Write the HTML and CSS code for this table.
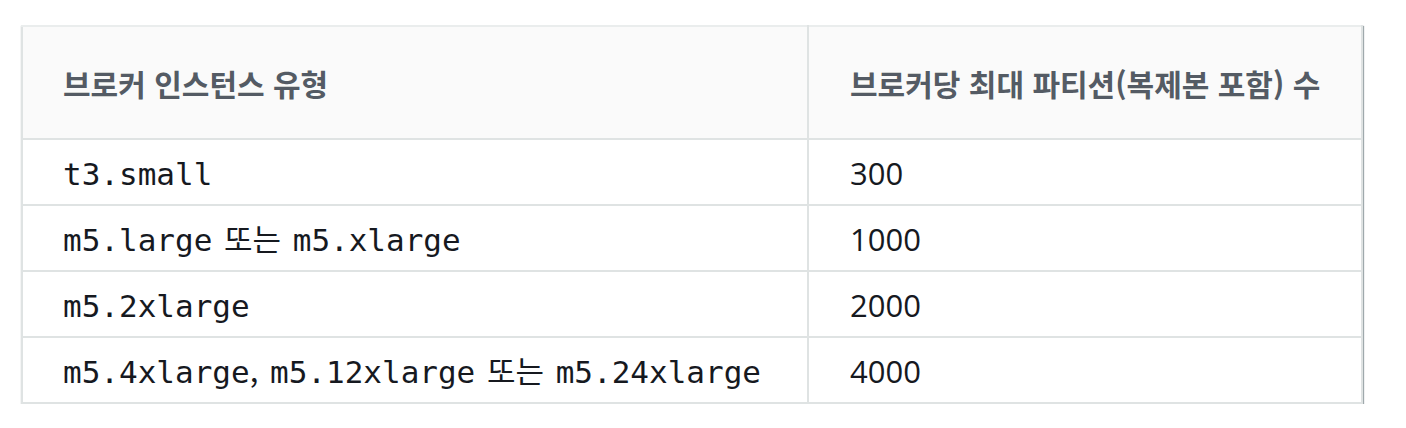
FILE: index.html
```html
<!DOCTYPE html>
<html lang="ko">
<head>
<meta charset="utf-8">
<link rel="stylesheet" href="styles.css">
</head>
<body>
<div class="wrap">
  <table class="tbl">
    <thead>
      <tr>
        <th class="c1">브로커 인스턴스 유형</th>
        <th class="c2">브로커당 최대 파티션(복제본 포함) 수</th>
      </tr>
    </thead>
    <tbody>
      <tr><td><code>t3.small</code></td><td class="num">300</td></tr>
      <tr><td><code>m5.large</code> 또는 <code>m5.xlarge</code></td><td class="num">1000</td></tr>
      <tr><td><code>m5.2xlarge</code></td><td class="num">2000</td></tr>
      <tr><td><code>m5.4xlarge</code>, <code>m5.12xlarge</code> 또는 <code>m5.24xlarge</code></td><td class="num">4000</td></tr>
    </tbody>
  </table>
</div>
</body>
</html>
```

FILE: styles.css
```css
html, body {
  margin: 0;
  padding: 0;
  background: #ffffff;
}
.wrap {
  padding: 25px 0 0 21px;
}
.tbl {
  width: 1342px;
  border-collapse: collapse;
  table-layout: fixed;
  font-family: "Noto Sans CJK KR", "Noto Sans", sans-serif;
  font-size: 31px;
  color: #16191f;
  box-shadow: 1px 1px 1px rgba(0, 28, 36, 0.35), 0 1px 1px rgba(0, 28, 36, 0.25);
}
.tbl th, .tbl td {
  border: 2px solid #dfe3e3;
  text-align: left;
  padding: 0 0 0 40px;
  vertical-align: middle;
}
.tbl th {
  height: 111px;
  background: #fafafa;
  color: #545b64;
  font-weight: 700;
  font-size: 30px;
  border-top-color: #eaeded;
}
.tbl td {
  height: 62px;
  line-height: 1;
  padding-top: 2px;
  word-spacing: 3px;
}
.tbl .c1 { width: 744px; }
.tbl td + td, .tbl th + th {
  padding-left: 41px;
}
.tbl .num {
  font-family: "Open Sans", "Noto Sans", sans-serif;
  font-size: 31px;
}
code {
  font-family: "DejaVu Sans Mono", "Liberation Mono", monospace;
  font-size: 31px;
  word-spacing: 0;
}
```
